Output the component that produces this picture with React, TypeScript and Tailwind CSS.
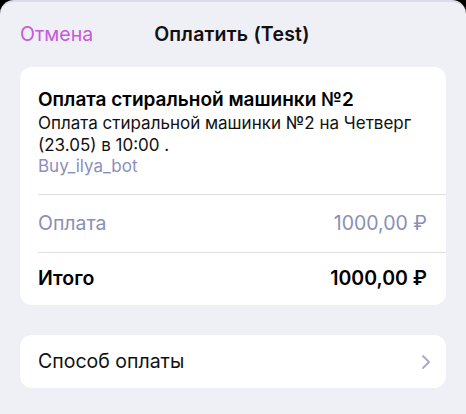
import { ChevronRight } from 'lucide-react';

const font = { fontFamily: 'Inter, "Noto Sans", sans-serif' };

const App = () => {
  return (
    <div className="w-[466px] h-[414px] bg-black overflow-hidden" style={font}>
      <div className="h-full bg-[#efeff6] rounded-t-[14px] border-t-2 border-[#dcdbeb] px-5">
        <header className="flex items-center h-[65px]">
          <span className="text-[19.5px] text-[#c65ad9]">Отмена</span>
          <h1 className="ml-[61px] text-[19.5px] font-semibold tracking-[0.2px] text-[#111]">Оплатить (Test)</h1>
        </header>

        <section className="bg-white rounded-[12px] pl-[18px]">
          <div className="pt-[21px] pb-[19px] pr-4">
            <h2 className="text-[19px] font-semibold text-black leading-[24px]">
              Оплата стиральной машинки №2
            </h2>
            <p className="text-[17px] text-[#111] leading-[22px]">
              Оплата стиральной машинки №2 на Четверг (23.05) в 10:00 .
            </p>
            <p className="text-[17px] text-[#8a8fbb] leading-[18px] mt-[1px]">Buy_ilya_bot</p>
          </div>
          <div className="border-t border-[#dedee4]" />
          <div className="flex justify-between items-center h-[57px] pr-[19px] text-[19.5px] text-[#8a8fb6]">
            <span>Оплата</span>
            <span>1000,00 ₽</span>
          </div>
          <div className="border-t border-[#dedee4]" />
          <div className="flex justify-between items-center h-[52px] pr-[19px] text-[19.5px] font-semibold text-black">
            <span>Итого</span>
            <span>1000,00 ₽</span>
          </div>
        </section>

        <section className="mt-[30px] bg-white rounded-[12px] h-[53px] pl-[18px] pr-[8px] flex items-center justify-between">
          <span className="text-[19.5px] text-[#111]">Способ оплаты</span>
          <ChevronRight className="w-[24px] h-[24px] text-[#aaa8d0]" strokeWidth={1.8} />
        </section>
      </div>
    </div>
  );
};

export default App;
